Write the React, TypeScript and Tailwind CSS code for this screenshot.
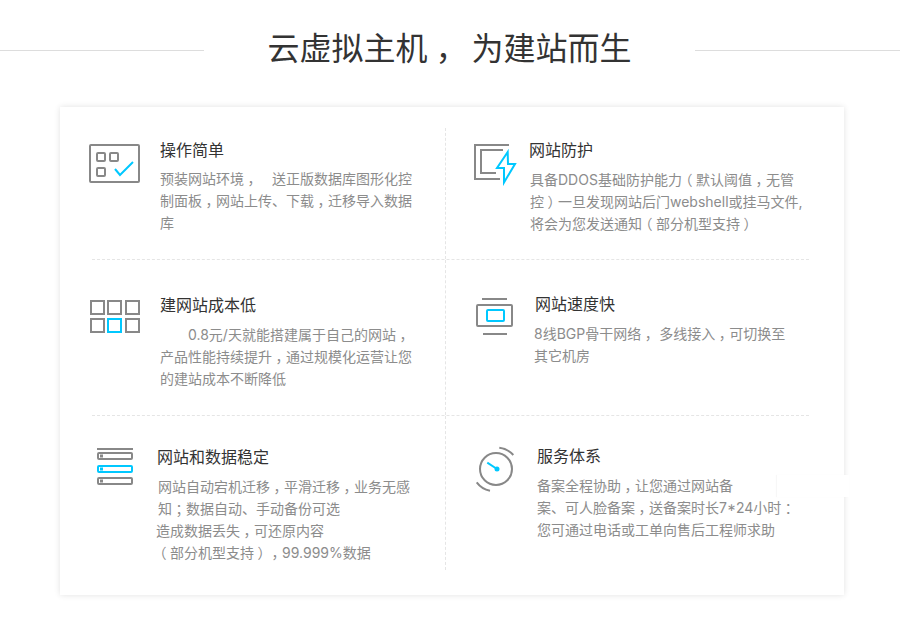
import React from "react";

const GRAY = "#888888";
const BLUE = "#00c8ff";

function IconPanel() {
    return (
        <svg width="52" height="40" viewBox="0 0 52 40" fill="none" strokeWidth="2">
            <rect x="2" y="2" width="49" height="37" rx="1" stroke={GRAY} />
            <rect x="9" y="10" width="8" height="8" rx="1" stroke={GRAY} />
            <rect x="22" y="10" width="8" height="8" rx="1" stroke={GRAY} />
            <rect x="9" y="25" width="8" height="8" rx="1" stroke={GRAY} />
            <path d="M27 26 L32 32 L45 19" stroke={BLUE} />
        </svg>
    );
}

function IconShield() {
    return (
        <svg width="46" height="44" viewBox="0 0 46 44" fill="none" strokeWidth="2">
            <path d="M37 3 H3 V37 H28" stroke={GRAY} />
            <path d="M31 8 H9 V31 H24" stroke={GRAY} />
            <path d="M35.7 10 L25 26 H32 V40.5 L43 22 H36 Z" stroke={BLUE} />
        </svg>
    );
}

function IconGrid() {
    const cells = [1, 18, 36];
    return (
        <svg width="50" height="33" viewBox="0 0 50 33" fill="none" strokeWidth="2">
            {cells.map((x) => (
                <rect key={x} x={x} y="1" width="13" height="13" stroke={GRAY} />
            ))}
            <rect x="1" y="19" width="13" height="13" stroke={GRAY} />
            <rect x="18" y="19" width="13" height="13" stroke={BLUE} />
            <rect x="36" y="19" width="13" height="13" stroke={GRAY} />
        </svg>
    );
}

function IconScreen() {
    return (
        <svg width="38" height="39" viewBox="0 0 38 39" fill="none" strokeWidth="2">
            <path d="M6 2 H31" stroke={GRAY} />
            <rect x="1" y="8" width="35" height="21" rx="1" stroke={GRAY} />
            <rect x="11" y="13" width="17" height="11" rx="1" stroke={BLUE} />
            <path d="M7 37 H31" stroke={GRAY} />
        </svg>
    );
}

function IconStack() {
    return (
        <svg width="38" height="38" viewBox="0 0 38 38" fill="none" strokeWidth="2">
            <path d="M1 1 H37" stroke={GRAY} />
            <rect x="2" y="5" width="34" height="6" rx="1" stroke={GRAY} />
            <rect x="4" y="6.5" width="3" height="3" fill={GRAY} stroke="none" />
            <rect x="2" y="18" width="34" height="6" rx="1" stroke={BLUE} />
            <rect x="4" y="19.5" width="3" height="3" fill={BLUE} stroke="none" />
            <rect x="2" y="30" width="34" height="6" rx="1" stroke={GRAY} />
            <rect x="4" y="31.5" width="3" height="3" fill={GRAY} stroke="none" />
        </svg>
    );
}

function IconClock() {
    return (
        <svg width="44" height="48" viewBox="0 0 44 48" fill="none" strokeWidth="2">
            <circle cx="22" cy="24" r="16" stroke={GRAY} />
            <path d="M25.3 2.7 A22 22 0 0 1 39.3 10" stroke={GRAY} />
            <path d="M2.7 37.3 A22 22 0 0 0 16 45.7" stroke={GRAY} />
            <path d="M13.3 17.7 L23 24" stroke={BLUE} />
            <circle cx="23" cy="24" r="2.5" fill={BLUE} />
        </svg>
    );
}

// full-width punctuation sits in the middle of its em box in the reference
function Punctuated({ text }: { text: string }) {
    return (
        <>
            {text.split(/([，；：（）])/).map((part, i) =>
                i % 2 === 1 ? (
                    <span
                        key={i}
                        className="inline-block w-[1em] text-center [font-feature-settings:'halt']"
                    >
                        {part}
                    </span>
                ) : (
                    part
                ),
            )}
        </>
    );
}

type Feature = {
    title: string;
    lines: { text: string; className?: string }[];
    icon: React.ReactNode;
    cell: string;
    iconBox: string;
    body: string;
    desc: string;
};

const rows: Feature[][] = [
    [
        {
            title: "操作简单",
            lines: [
                { text: "预装网站环境，　送正版数据库图形化控" },
                { text: "制面板，网站上传、下载，迁移导入数据" },
                { text: "库" },
            ],
            icon: <IconPanel />,
            cell: "pl-[28px] border-r border-dashed border-[#e5e5e5]",
            iconBox: "mt-[15px] mr-[20px]",
            body: "mt-[10px]",
            desc: "mt-[6px]",
        },
        {
            title: "网站防护",
            lines: [
                { text: "具备DDOS基础防护能力（默认阈值，无管" },
                { text: "控）一旦发现网站后门webshell或挂马文件," },
                { text: "将会为您发送通知（部分机型支持）" },
            ],
            icon: <IconShield />,
            cell: "pl-[26px]",
            iconBox: "mt-[14px] mr-[11px]",
            body: "mt-[10px]",
            desc: "mt-[7px] ml-px",
        },
    ],
    [
        {
            title: "建网站成本低",
            lines: [
                { text: "　　0.8元/天就能搭建属于自己的网站，" },
                { text: "产品性能持续提升，通过规模化运营让您" },
                { text: "的建站成本不断降低" },
            ],
            icon: <IconGrid />,
            cell: "pl-[30px] border-r border-dashed border-[#e5e5e5]",
            iconBox: "mt-[40px] mr-[20px]",
            body: "mt-[33px]",
            desc: "mt-[7px]",
        },
        {
            title: "网站速度快",
            lines: [
                { text: "8线BGP骨干网络， 多线接入，可切换至" },
                { text: "其它机房" },
            ],
            icon: <IconScreen />,
            cell: "pl-[30px]",
            iconBox: "mt-[37px] mr-[21px]",
            body: "mt-[32px]",
            desc: "mt-[7px] -ml-px",
        },
    ],
    [
        {
            title: "网站和数据稳定",
            lines: [
                { text: "网站自动宕机迁移，平滑迁移，业务无感" },
                { text: "知；数据自动、手动备份可选" },
                { text: "造成数据丢失，可还原内容", className: "-ml-[2px]" },
                { text: "（部分机型支持），99.999%数据", className: "-ml-[2px]" },
            ],
            icon: <IconStack />,
            cell: "pl-[36px] border-r border-dashed border-[#e5e5e5]",
            iconBox: "mt-[32px] mr-[23px]",
            body: "mt-[29px]",
            desc: "mt-[7px] ml-px",
        },
        {
            title: "服务体系",
            lines: [
                { text: "备案全程协助，让您通过网站备" },
                { text: "案、可人脸备案，送备案时长7*24小时：" },
                { text: "您可通过电话或工单向售后工程师求助" },
            ],
            icon: <IconClock />,
            cell: "pl-[28px]",
            iconBox: "mt-[29px] mr-[19px]",
            body: "mt-[28px]",
            desc: "mt-[7px]",
        },
    ],
];

const rowHeights = ["h-[131px]", "h-[155px]", "h-[154px]"];

export default function App() {
    return (
        <main className="relative w-[900px] h-[620px] overflow-hidden bg-white font-['Inter','Noto_Sans_CJK_SC','Liberation_Sans',sans-serif]">
            <header className="flex items-center h-[100px]">
                <div className="w-[204px] border-t border-[#dddddd]"></div>
                <h1 className="flex-1 -mt-[2px] text-center text-[32px] leading-[44px] font-normal text-[#333333] whitespace-pre [word-spacing:3px]">
                    <Punctuated text="云虚拟主机， 为建站而生" />
                </h1>
                <div className="w-[205px] border-t border-[#dddddd]"></div>
            </header>

            <section className="ml-[60px] mt-[7px] w-[784px] h-[488px] pt-[21px] bg-white shadow-[0_0_6px_rgba(0,0,0,0.12)]">
                {rows.map((row, i) => (
                    <div key={i}>
                        {i > 0 && (
                            <div className="h-px ml-[32px] mr-[35px] border-t border-dashed border-[#e5e5e5]"></div>
                        )}
                        <div className={`grid grid-cols-[386px_1fr] ${rowHeights[i]}`}>
                            {row.map((item) => (
                                <div key={item.title} className={`flex items-start ${item.cell}`}>
                                    <div className={`shrink-0 ${item.iconBox}`}>{item.icon}</div>
                                    <div className={item.body}>
                                        <h2 className="text-base leading-6 font-normal text-[#333333]">
                                            {item.title}
                                        </h2>
                                        <div className={`text-sm leading-[22px] text-[#8c8c8c] whitespace-pre [text-spacing-trim:space-all] ${item.desc}`}>
                                            {item.lines.map((line) => (
                                                <p key={line.text} className={line.className}>
                                                    <Punctuated text={line.text} />
                                                </p>
                                            ))}
                                        </div>
                                    </div>
                                </div>
                            ))}
                        </div>
                    </div>
                ))}
            </section>

            {/* white patch over the card's right edge */}
            <div className="absolute left-[777px] top-[475px] w-[72px] h-[22px] bg-white shadow-[-1px_0_1px_rgba(0,0,0,0.03)]"></div>
        </main>
    );
}
